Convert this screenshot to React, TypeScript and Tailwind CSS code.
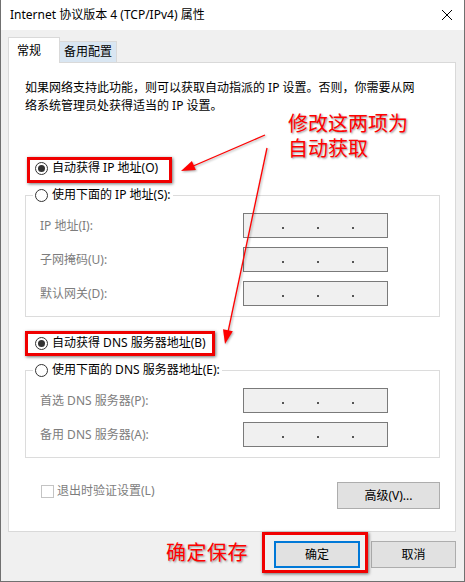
import React from "react";

const font = "font-['Noto_Sans','Noto_Sans_CJK_SC',sans-serif]";
const cjk = "font-['Noto_Sans_CJK_SC','Noto_Sans',sans-serif]";

function Radio({ checked, label }: { checked?: boolean; label: string }) {
  return (
    <div className="flex items-center h-[18px] text-[12px] leading-[18px] text-black whitespace-nowrap">
      <span className="w-[13px] h-[13px] rounded-full border border-[#333] bg-white flex items-center justify-center shrink-0">
        {checked && <span className="w-[7px] h-[7px] rounded-full bg-[#333]" />}
      </span>
      <span className="ml-[4px]">{label}</span>
    </div>
  );
}

function RedBox({ className }: { className: string }) {
  return (
    <div
      className={
        "absolute border-[3px] border-[#f00000] shadow-[1px_1px_3px_rgba(0,0,0,0.55)] pointer-events-none " +
        className
      }
    />
  );
}

function IpField() {
  return (
    <div className="w-[145px] h-[25px] bg-[#f0f0f0] border border-[#7a7a7a] flex items-end pb-[8px] pl-[38px] gap-[33px]">
      <span className="w-[2px] h-[2px] bg-[#555]" />
      <span className="w-[2px] h-[2px] bg-[#555]" />
      <span className="w-[2px] h-[2px] bg-[#555]" />
    </div>
  );
}

function Label({ text }: { text: string }) {
  return <div className="text-[12px] leading-[18px] text-[#7d7d7d] whitespace-nowrap">{text}</div>;
}

function Group({ legend, rows }: { legend: string; rows: string[] }) {
  return (
    <fieldset className="border border-[#dcdcdc] m-0 p-0 min-w-0">
      <legend className="ml-[7px] px-[2px]">
        <Radio label={legend} />
      </legend>
      <div className="grid grid-cols-[203px_145px] gap-y-[9px] items-center pl-[14px] pt-[9px] pb-[10px]">
        {rows.map((r) => (
          <React.Fragment key={r}>
            <Label text={r} />
            <IpField />
          </React.Fragment>
        ))}
      </div>
    </fieldset>
  );
}

const shadowText =
  "text-[20px] leading-[25px] text-[#ff0000] pointer-events-none whitespace-nowrap [text-shadow:1px_1px_2px_rgba(0,0,0,0.45),0_0_2px_#fff] ";

export default function App() {
  return (
    <div
      className={
        "relative w-[465px] h-[582px] bg-[#f0f0f0] border-x border-b border-[#707070] overflow-hidden " + font
      }
    >
      {/* Title bar */}
      <div className="h-[30px] bg-white flex items-center justify-between pl-[9px] pr-[10px]">
        <span className="text-[12px] leading-[16px] text-black">Internet 协议版本 4 (TCP/IPv4) 属性</span>
        <svg width="12" height="12" viewBox="0 0 12 12" className="mr-[1px]">
          <path d="M1 1 L11 11 M11 1 L1 11" stroke="#000" strokeWidth="1" />
        </svg>
      </div>

      <div className="pl-[7px] pr-[8px] pt-[7px]">
        {/* Tabs */}
        <div className="flex items-end relative z-10 -mb-px">
          <div className="h-[26px] w-[52px] bg-white border border-b-0 border-[#d9d9d9] pl-[8px] pt-[5px] text-[12px] leading-[16px] text-black">
            常规
          </div>
          <div className="h-[22px] w-[57px] bg-[#d9e6f2] border border-l-0 border-[#d9d9d9] pl-[4px] pt-[2px] text-[12px] leading-[16px] text-black">
            备用配置
          </div>
        </div>

        {/* Panel */}
        <div className="h-[470px] bg-white border border-[#d9d9d9] pl-[16px] pr-[15px] pt-[16px]">
          <p className="text-[12px] leading-[18px] text-black whitespace-nowrap">
            如果网络支持此功能，则可以获取自动指派的 IP 设置。否则，你需要从网
            <br />
            络系统管理员处获得适当的 IP 设置。
          </p>

          <div className="relative mt-[44px] ml-[10px] w-fit">
            <Radio checked label="自动获得 IP 地址(O)" />
            <RedBox className="-left-[8px] -top-[2px] w-[145px] h-[26px]" />
          </div>

          <div className="mt-[9px]">
            <Group legend="使用下面的 IP 地址(S):" rows={["IP 地址(I):", "子网掩码(U):", "默认网关(D):"]} />
          </div>

          <div className="relative mt-[17px] ml-[10px] w-fit">
            <Radio checked label="自动获得 DNS 服务器地址(B)" />
            <RedBox className="-left-[10px] -top-[3px] w-[190px] h-[25px]" />
          </div>

          <div className="mt-[9px]">
            <Group legend="使用下面的 DNS 服务器地址(E):" rows={["首选 DNS 服务器(P):", "备用 DNS 服务器(A):"]} />
          </div>

          <div className="mt-[24px] flex items-start justify-between pl-[16px]">
            <div className="flex items-center h-[18px]">
              <span className="w-[13px] h-[13px] border border-[#c4c4c4] bg-white" />
              <span className="ml-[3px] text-[12px] leading-[18px] text-[#7d7d7d]">退出时验证设置(L)</span>
            </div>
            <div className="w-[103px] h-[27px] bg-[#e1e1e1] border border-[#adadad] flex items-center justify-center text-[12px] text-black">
              高级(V)...
            </div>
          </div>
        </div>

        {/* Bottom buttons */}
        <div className="mt-[9px] flex justify-end gap-[11px]">
          <div className="relative">
            <div className="w-[86px] h-[27px] bg-[#e1e1e1] border-2 border-[#0078d7] flex items-center justify-center text-[12px] text-black">
              确定
            </div>
            <RedBox className="-left-[12px] -top-[9px] w-[106px] h-[41px]" />
          </div>
          <div className="w-[85px] h-[27px] bg-[#e1e1e1] border border-[#adadad] flex items-center justify-center text-[12px] text-black">
            取消
          </div>
        </div>
      </div>

      {/* Annotations */}
      <div className={"absolute left-[287px] top-[110px] flex flex-col " + cjk}>
        <div className={shadowText}>修改这两项为</div>
        <div className={shadowText}>自动获取</div>
      </div>
      <div className={"absolute left-[165px] top-[539px] tracking-[0.5px] " + shadowText + cjk}>确定保存</div>

      <svg
        className="absolute inset-0 pointer-events-none drop-shadow-[1px_1px_1px_rgba(0,0,0,0.35)]"
        width="465"
        height="582"
        viewBox="0 0 465 582"
      >
        <line x1="264" y1="135" x2="190" y2="167" stroke="#ff0000" strokeWidth="1.3" />
        <polygon points="180,171 194.9,170.1 190.9,160.9" fill="#ff0000" />
        <line x1="266" y1="148" x2="227" y2="332" stroke="#ff0000" strokeWidth="1.3" />
        <polygon points="224,344 231.8,331.3 222,329.2" fill="#ff0000" />
      </svg>
    </div>
  );
}
